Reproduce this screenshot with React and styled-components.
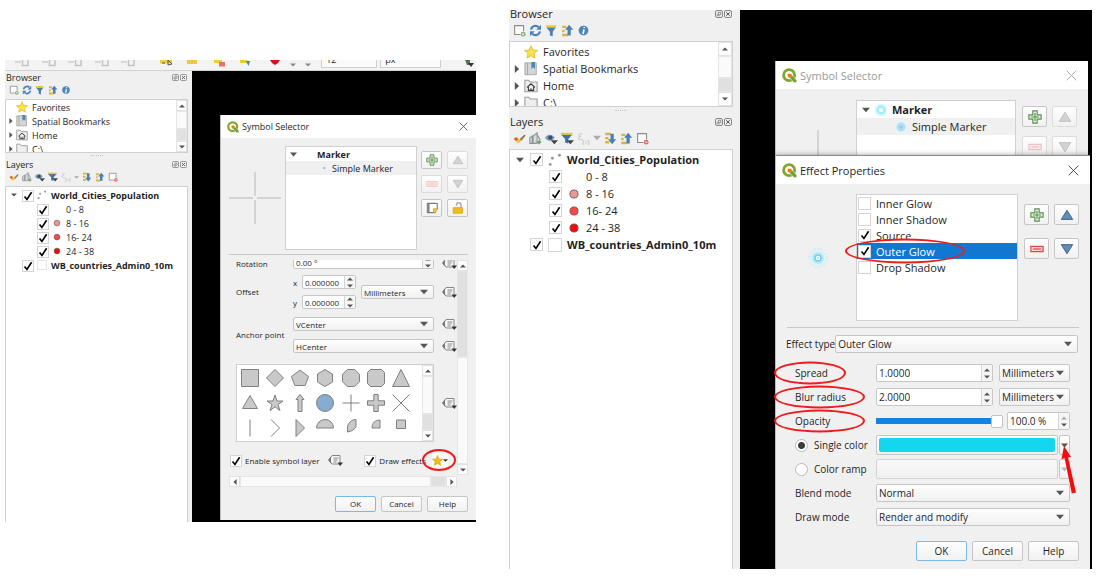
import React, { useState } from 'react';
import styled, { createGlobalStyle, css, ThemeProvider } from 'styled-components';

const small = {
  font: 9,
  formFont: 8,
  sidebar: 187,
  panelTitle: 12,
  panelTools: 14,
  panelIcon: 10,
  treeHeight: 54,
  splitter: 5,
  row: 14,
  rowGap: 4,
  arrow: 10,
  layerArrow: 16,
  treeIcon: 12,
  layerIcon: 10,
  indent: 15,
  check: 11,
  scroll: 11,
  titleBar: 23,
  logo: 12,
  pad: 8,
  preview: 56,
  control: 14,
  button: 16,
  buttonWidth: 41,
  footerTop: 9,
  tool: 18,
  toolWidth: 21,
  toolGap: 6,
};

const large = {
  font: 11,
  formFont: 10,
  sidebar: 231,
  panelTitle: 15,
  panelTools: 18,
  panelIcon: 13,
  treeHeight: 66,
  splitter: 7,
  row: 17,
  rowGap: 5,
  arrow: 14,
  layerArrow: 20,
  treeIcon: 14,
  layerIcon: 14,
  indent: 19,
  check: 13,
  scroll: 14,
  titleBar: 28,
  logo: 15,
  pad: 11,
  preview: 69,
  control: 18,
  button: 20,
  buttonWidth: 51,
  footerTop: 8,
  tool: 21,
  toolWidth: 25,
  toolGap: 9,
};

const px = (key) => (props) => `${props.theme[key]}px`;

const GlobalStyle = createGlobalStyle`
  *, *::before, *::after {
    box-sizing: border-box;
  }
  body {
    margin: 0;
    background: #fff;
    font-family: 'Open Sans', 'Noto Sans', sans-serif;
    color: #1f1f1f;
  }
  button, input, select {
    font: inherit;
    color: inherit;
    margin: 0;
    padding: 0;
  }
  svg {
    display: block;
    flex: none;
  }
`;

/* ---------- icons ---------- */

const Svg = ({ size = 16, w, h, children, box = '0 0 16 16' }) => (
  <svg width={w || size} height={h || size} viewBox={box} fill="none" aria-hidden="true">
    {children}
  </svg>
);

const QgisLogo = ({ size }) => (
  <Svg size={size}>
    <circle cx="7.6" cy="7.6" r="5.9" stroke="#7fa82c" strokeWidth="3" />
    <path d="M8.3 8.3l3-.2 4.4 5v2.4h-3L8.6 11z" fill="#6f9f2f" stroke="#fff" strokeWidth=".6" />
    <path d="M6 6h3.5l1.3 1.8-2.8 2.8L6 9z" fill="#ee7913" />
  </Svg>
);

const Cross = ({ size, color = '#444' }) => (
  <Svg size={size}>
    <path d="M1 1l14 14M15 1L1 15" stroke={color} strokeWidth="1.4" />
  </Svg>
);

const Tick = ({ size }) => (
  <Svg size={size}>
    <path d="M3.4 8.6l3.2 4L12.8 3" stroke="#000" strokeWidth="2.2" />
  </Svg>
);

const Triangle = ({ dir = 'down', size = 6, color = '#555' }) => {
  const d = {
    down: 'M0 2.300h10L5 7.700z',
    up: 'M0 7.700h10L5 2.300z',
    right: 'M2.300 0v10l5.400-5z',
    left: 'M7.700 0v10L2.300 5z',
  }[dir];
  return (
    <Svg size={size} box="0 0 10 10">
      <path d={d} fill={color} />
    </Svg>
  );
};

const FloatIcon = ({ size }) => (
  <Svg size={size}>
    <rect x="1" y="1" width="14" height="14" rx="3" stroke="#888" strokeWidth="2" />
    <path d="M4.5 7v4.5h5M7 4.5h4.5v5H7z" stroke="#777" strokeWidth="1.5" />
  </Svg>
);

const CloseBoxIcon = ({ size }) => (
  <Svg size={size}>
    <rect x="1" y="1" width="14" height="14" rx="3" stroke="#888" strokeWidth="2" />
    <path d="M4.5 4.5l7 7M11.5 4.5l-7 7" stroke="#555" strokeWidth="2" />
  </Svg>
);

const AddLayerIcon = ({ size }) => (
  <Svg size={size}>
    <path d="M9 13H2V2h11v7" stroke="#8b8b8b" strokeWidth="1.3" fill="#fafafa" />
    <circle cx="12.5" cy="12.5" r="3" fill="#7ba86c" />
    <path d="M12.5 10.8v3.4M10.8 12.5h3.4" stroke="#fff" />
  </Svg>
);

const RefreshIcon = ({ size }) => (
  <Svg size={size}>
    <path d="M2.5 7A5.6 5.6 0 0 1 12 4M13.5 9A5.6 5.6 0 0 1 4 12" stroke="#4a83b8" strokeWidth="2.6" />
    <path d="M14.8 1v6H9zM1.2 15V9H7z" fill="#4a83b8" />
  </Svg>
);

const FilterIcon = ({ size }) => (
  <Svg size={size}>
    <path d="M1.500 4h12L9.500 9.5V15l-3.500-1V9.5z" fill="#4d7fae" />
    <path d="M1.500 1.5h12v2.8h-12z" fill="#e9cb3a" />
  </Svg>
);

const CollapseIcon = ({ size }) => (
  <Svg size={size}>
    <path d="M1.5 2h5v3h-5zM1.500 7h3v3h-3zM1.5 12h7v3h-7z" fill="#d9b441" />
    <path d="M10 1l5 6h-3v7H8V7H5z" fill="#4a7fb5" />
  </Svg>
);

const ExpandIcon = ({ size }) => (
  <Svg size={size}>
    <path d="M1.5 1h7v3h-7zM1.5 6h4v3h-4zM1.5 11h5v3h-5z" fill="#d9b441" />
    <path d="M10 15l5-6h-3V2H8v7H5z" fill="#4a7fb5" />
  </Svg>
);

const InfoIcon = ({ size }) => (
  <Svg size={size}>
    <circle cx="8" cy="8" r="6" fill="#4f86b9" />
    <path d="M9 3.6v1.6M8.6 6.8L7.4 12.4" stroke="#fff" strokeWidth="2" />
  </Svg>
);

const BrushIcon = ({ size }) => (
  <Svg size={size}>
    <path d="M8 9l6-6 1.5 1.5L10 11z" fill="#9b7a55" />
    <path d="M1 8l4-2 5 5-4 3z" fill="#ecc23c" />
    <path d="M1 8l3-1.5 2 2.5-2.5 2z" fill="#d8524b" />
  </Svg>
);

const GroupIcon = ({ size }) => (
  <Svg size={size}>
    <path d="M1 14V7l3-2v9zM5 14V5l5-4v13z" stroke="#8b9298" strokeWidth="1.3" fill="#d7dadd" />
    <path d="M10 3l4 7" stroke="#8b9298" strokeWidth="1.4" />
    <path d="M12.5 10v5M10 12.5h5" stroke="#6ea15c" strokeWidth="2" />
  </Svg>
);

const EyeIcon = ({ size }) => (
  <Svg size={size}>
    <path d="M0 7c3-5 9-5 12 0-3 5-9 5-12 0z" fill="#7c99b3" />
    <circle cx="6.500" cy="7" r="2.600" fill="#34536f" />
    <path d="M7 10h9l-4.500 5z" fill="#444" />
  </Svg>
);

const FilterMenuIcon = ({ size }) => (
  <Svg size={size}>
    <path d="M0 3h14L9 8.500V14L5 13V8.500z" fill="#3f74a8" />
    <path d="M0 1h14v2.500H0z" fill="#dfc83e" />
    <path d="M7 10h9l-4.500 5z" fill="#444" />
  </Svg>
);

const ExpressionIcon = ({ size }) => (
  <Svg size={size}>
    <path
      d="M7 2.500C4 1.500 2 2.500 2.500 4s2 1.500 2.500 1.500C3 5.500 1 7 2 8.500s4 1 5 .5M9 10.500H7.500V15H9M13 10.500h1.500V15H13M11 11v3.500"
      stroke="#c8c8c8"
      strokeWidth="1.300"
    />
  </Svg>
);

const RemoveLayerIcon = ({ size }) => (
  <Svg size={size}>
    <path d="M9 13H2V2h11v7" stroke="#8b8b8b" strokeWidth="1.300" fill="#fafafa" />
    <circle cx="12.500" cy="12.500" r="3" fill="#e26b6b" />
    <path d="M10.800 12.500h3.400" stroke="#fff" />
  </Svg>
);

const StarIcon = ({ size, fill = '#fbe24a', stroke = '#e2b92c' }) => (
  <Svg size={size}>
    <path
      d="M8 .8l2.100 5 5.300.4-4 3.500 1.200 5.300L8 12.200 3.400 15l1.200-5.300-4-3.500 5.300-.4z"
      fill={fill}
      stroke={stroke}
      strokeLinejoin="round"
    />
  </Svg>
);

const BookmarkIcon = ({ size }) => (
  <Svg size={size}>
    <path d="M1 1h13v13.500H1z" fill="#d5d5d5" stroke="#a2a2a2" />
    <path d="M4 1v13.500" stroke="#a2a2a2" />
    <path d="M8.500 0h4v8l-2-2-2 2z" fill="#4d83b5" />
  </Svg>
);

const FolderIcon = ({ size, home }) => (
  <Svg size={size}>
    <path d="M1 14.500V1.500h4.500l1.500 2h8v11z" fill="#eee" stroke="#9b9b9b" strokeWidth="1.200" />
    {home && <path d="M3.500 9.500L8 5.500l4.500 4M5 9v4h6V9M8 10.500V13" stroke="#333" strokeWidth="1.200" />}
  </Svg>
);

const PointsIcon = ({ size }) => (
  <Svg size={size}>
    <circle cx="2.500" cy="13" r="1.700" fill="#999" />
    <circle cx="5" cy="6" r="1.700" fill="#999" />
    <circle cx="13" cy="2.500" r="1.700" fill="#999" />
  </Svg>
);

const DotIcon = ({ size, color }) => (
  <Svg size={size}>
    {color && <circle cx="8" cy="8" r="4.600" fill={color} stroke="#6c5050" strokeWidth="1" />}
  </Svg>
);

const BoxIcon = ({ size }) => (
  <Svg size={size}>
    <path d="M.5.5h15v15H.5z" fill="#fff" stroke="#cfcfcf" />
  </Svg>
);

const PlusIcon = ({ size, color = '#5b9150' }) => (
  <Svg size={size}>
    <path
      d="M5.500 1h5v4.500H15v5h-4.500V15h-5v-4.500H1v-5h4.500z"
      fill="#e4eee0"
      stroke={color}
      strokeWidth="1.300"
    />
    <path d="M8 3.500v9M3.500 8h9" stroke={color} strokeWidth="1.300" />
  </Svg>
);

const MinusIcon = ({ size, faded }) => (
  <Svg size={size}>
    <g opacity={faded ? 0.3 : 1}>
      <path d="M1 5h14v6H1z" fill="#fbd0d0" stroke="#e3474e" strokeWidth="1.400" />
      <path d="M3.500 8h9" stroke="#e3474e" strokeWidth="1.400" />
    </g>
  </Svg>
);

const MoveIcon = ({ size, down, faded }) => (
  <Svg size={size}>
    <path
      d={down ? 'M1.500 3h13L8 13.500z' : 'M1.500 13h13L8 2.500z'}
      fill={faded ? '#d3d3d3' : '#5f8cba'}
      stroke={faded ? '#bcbcbc' : '#34587e'}
      strokeLinejoin="round"
    />
  </Svg>
);

const DuplicateIcon = ({ size }) => (
  <Svg size={size}>
    <path d="M1 1h12v1.500H4V13h9v2H1z" fill="#8a8a8a" />
    <path d="M4 2h11v7l-5 5H4z" fill="#fff" stroke="#777" strokeWidth="1.400" />
    <path d="M10 9h5v1.500L11.500 14H10z" fill="#f1cf45" stroke="#c79a1c" />
  </Svg>
);

const LockIcon = ({ size }) => (
  <Svg size={size}>
    <path d="M6 5V4a3 3 0 0 1 6 0v4" stroke="#aaa" strokeWidth="2" />
    <path d="M1.500 7.500h12.500v7.500H1.500z" fill="#efbd1c" stroke="#d6a61b" />
  </Svg>
);

const OverrideIcon = () => (
  <Svg w={15} h={12} box="0 0 15 12">
    <path d="M4 1.500h8v8.500H4L1 6z" fill="#f5f5f5" stroke="#888" />
    <path d="M3 2.500v7L0 6z" fill="#777" />
    <path d="M5.500 4h5M5.500 6h4M5.500 8h3" stroke="#888" />
    <path d="M9.500 8.500h5.500L12.200 12z" fill="#333" />
  </Svg>
);

const GlowIcon = ({ size, core = '#fff', tone = '#9be4f7', edge = '#e3f7fc' }) => (
  <Svg size={size}>
    <circle cx="8" cy="8" r="7.500" fill={edge} />
    <circle cx="8" cy="8" r="5.300" fill={tone} opacity=".75" />
    <circle cx="8" cy="8" r="2.300" fill={core} />
  </Svg>
);

const GlowPreview = () => (
  <Svg size={22} box="0 0 22 22">
    <circle cx="11" cy="11" r="8.500" stroke="#cdeff8" strokeWidth="3" strokeDasharray="1.500 1.500" />
    <circle cx="11" cy="11" r="6" fill="#b4eaf9" />
    <circle cx="11" cy="11" r="3" fill="#fff" stroke="#72cdec" strokeWidth="1.600" />
    <circle cx="11" cy="11" r="1" fill="#a9dcf2" />
  </Svg>
);

/* ---------- shared controls ---------- */

const CheckWrap = styled.span`
  display: inline-grid;
  place-items: center;
  flex: none;
  width: ${px('check')};
  height: ${px('check')};
  > * {
    grid-area: 1 / 1;
  }
  svg {
    pointer-events: none;
    visibility: hidden;
  }
  input:checked + svg {
    visibility: visible;
  }
`;

const CheckInput = styled.input`
  appearance: none;
  width: 100%;
  height: 100%;
  background: #fff;
  border: 1px solid #d4d4d4;
`;

const Check = ({ checked, ...rest }) => (
  <CheckWrap>
    <CheckInput type="checkbox" defaultChecked={checked} {...rest} />
    <Tick size={12} />
  </CheckWrap>
);

const CheckLabel = styled.label`
  display: flex;
  align-items: center;
  gap: ${px('rowGap')};
  white-space: nowrap;
`;

const raised = css`
  background: linear-gradient(#fefefe, #f1f1f1);
  border: 1px solid #c6c6c6;
  border-radius: 2px;
`;

const PushButton = styled.button`
  ${raised}
  width: ${px('buttonWidth')};
  height: ${px('button')};
  line-height: 1;
  border-color: ${(props) => (props.$primary ? '#7db9e8' : '#c6c6c6')};
`;

const ToolButton = styled.button`
  ${raised}
  display: grid;
  place-items: center;
  width: ${px('toolWidth')};
  height: ${px('tool')};
  border-color: ${(props) => (props.disabled ? '#dcdcdc' : '#c6c6c6')};
`;

const PlainButton = styled.button`
  display: grid;
  place-items: center;
  border: none;
  background: none;
`;

const SelectWrap = styled.span`
  display: grid;
  align-items: center;
  min-width: 0;
  flex: ${(props) => (props.$width ? `0 0 ${props.$width}px` : '1')};
  > * {
    grid-area: 1 / 1;
  }
  svg {
    justify-self: end;
    margin-right: 6px;
    pointer-events: none;
  }
`;

const SelectBox = styled.select`
  ${raised}
  appearance: none;
  width: 100%;
  height: ${px('control')};
  padding: 0 2px;
`;

const Select = ({ value, width, ...rest }) => (
  <SelectWrap $width={width}>
    <SelectBox {...rest}>
      <option>{value}</option>
    </SelectBox>
    <Triangle size={8} />
  </SelectWrap>
);

const SpinWrap = styled.span`
  display: flex;
  flex: ${(props) => (props.$width ? `0 0 ${props.$width}px` : '1')};
  min-width: 0;
  height: ${px('control')};
  background: #fff;
  border: 1px solid #c6c6c6;
  border-radius: 2px;
`;

const SpinInput = styled.input`
  flex: 1;
  min-width: 0;
  width: 0;
  padding-left: 2px;
  border: none;
  background: none;
  line-height: 1;
`;

const SpinArrows = styled.span`
  display: flex;
  flex-direction: column;
  justify-content: center;
  align-items: center;
  gap: 1px;
  width: 11px;
  background: #f6f6f6;
  border-left: 1px solid #d4d4d4;
`;

const Spin = ({ value, width, maxed, ...rest }) => (
  <SpinWrap $width={width}>
    <SpinInput type="text" defaultValue={value} {...rest} />
    <SpinArrows>
      <PlainButton aria-label="Increase">
        <Triangle dir="up" color={maxed ? '#aaa' : '#555'} />
      </PlainButton>
      <PlainButton aria-label="Decrease">
        <Triangle />
      </PlainButton>
    </SpinArrows>
  </SpinWrap>
);

const Marked = styled.span`
  position: relative;
`;

const RedRing = styled.span`
  position: absolute;
  top: 50%;
  left: ${(props) => props.$left}px;
  width: ${(props) => props.$width}px;
  height: ${(props) => props.$height}px;
  transform: translateY(-50%);
  border: 2px solid #ee1c1c;
  border-radius: 50%;
  pointer-events: none;
  z-index: 2;
`;

/* ---------- scroll bars ---------- */

const Bar = styled.div`
  display: flex;
  flex-direction: ${(props) => (props.$horizontal ? 'row' : 'column')};
  flex: none;
  ${(props) => (props.$horizontal ? 'height' : 'width')}: ${px('scroll')};
  background: #f8f8f8;
`;

const BarButton = styled.button`
  display: grid;
  place-items: center;
  flex: none;
  width: ${px('scroll')};
  height: ${px('scroll')};
  border: 1px solid #e2e2e2;
  background: #fdfdfd;
`;

const BarPart = styled.div`
  flex: ${(props) => props.$size};
  background: ${(props) => (props.$thumb ? '#e0e0e0' : '#fafafa')};
  border: 1px solid #e6e6e6;
`;

const ScrollBar = ({ horizontal, before = 0, thumb, after = 0 }) => (
  <Bar $horizontal={horizontal}>
    <BarButton aria-label="Scroll back">
      <Triangle dir={horizontal ? 'left' : 'up'} />
    </BarButton>
    {before > 0 && <BarPart $size={before} />}
    <BarPart $size={thumb} $thumb />
    {after > 0 && <BarPart $size={after} />}
    <BarButton aria-label="Scroll forward">
      <Triangle dir={horizontal ? 'right' : 'down'} />
    </BarButton>
  </Bar>
);

/* ---------- browser and layers panels ---------- */

const Sidebar = styled.aside`
  display: flex;
  flex-direction: column;
  flex: 0 0 ${px('sidebar')};
  padding-right: ${(props) => (props.$cropped ? 7 : 4)}px;
  margin-top: ${(props) => (props.$cropped ? -4 : 0)}px;
  background: #f0f0f0;
`;

const PanelTitle = styled.header`
  display: flex;
  align-items: center;
  gap: 1px;
  height: ${px('panelTitle')};
  padding: 0 1px;
  line-height: 1;
  h2 {
    flex: 1;
    margin: 0;
    font-size: inherit;
    font-weight: 400;
  }
`;

const PanelTools = styled.div`
  display: flex;
  align-items: center;
  gap: 3px;
  height: ${px('panelTools')};
  padding-left: 4px;
  margin-bottom: 2px;
`;

const Tree = styled.div`
  display: flex;
  height: ${px('treeHeight')};
  background: #fff;
  border: 1px solid #d0d0d0;
  ul {
    flex: 1;
    overflow: hidden;
  }
`;

const List = styled.ul`
  margin: 0;
  padding: ${(props) => (props.$padded ? 1 : 0)}px 0 0;
  list-style: none;
`;

const LayerList = styled(List)`
  flex: 1;
  background: #fff;
  border: 1px solid #d0d0d0;
  border-bottom: none;
`;

const Row = styled.li`
  display: flex;
  align-items: center;
  gap: ${px('rowGap')};
  height: ${px('row')};
  padding-left: ${(props) => (props.$nested ? props.theme.indent : 0)}px;
  font-weight: ${(props) => (props.$bold ? 700 : 400)};
  line-height: 1;
  white-space: nowrap;
`;

const RowArrow = styled.span`
  display: grid;
  place-items: center;
  width: ${(props) => (props.$layer ? props.theme.layerArrow : props.theme.arrow)}px;
  margin-right: -${px('rowGap')};
`;

const Splitter = styled.div`
  display: grid;
  place-items: center;
  height: ${px('splitter')};
  &::after {
    content: '';
    width: 12px;
    border-top: 1px dotted #c5c5c5;
  }
`;

const layers = [
  { name: 'World_Cities_Population', icon: PointsIcon, open: true },
  { name: '0 - 8', icon: DotIcon, nested: true },
  { name: '8 - 16', icon: DotIcon, color: '#e89a97', nested: true },
  { name: '16- 24', icon: DotIcon, color: '#f8484a', nested: true },
  { name: '24 - 38', icon: DotIcon, color: '#f90a0a', nested: true },
  { name: 'WB_countries_Admin0_10m', icon: BoxIcon },
];

const PanelHeader = ({ title, size }) => (
  <PanelTitle>
    <h2>{title}</h2>
    <PlainButton aria-label={`Float ${title}`}>
      <FloatIcon size={size} />
    </PlainButton>
    <PlainButton aria-label={`Close ${title}`}>
      <CloseBoxIcon size={size} />
    </PlainButton>
  </PanelTitle>
);

const browserTools = [
  ['Add layer', AddLayerIcon],
  ['Refresh', RefreshIcon],
  ['Filter', FilterIcon],
  ['Collapse all', CollapseIcon],
  ['Properties', InfoIcon],
];

const layerTools = [
  ['Style', BrushIcon],
  ['Add group', GroupIcon],
  ['Visibility', EyeIcon],
  ['Filter legend', FilterMenuIcon],
  ['Filter by expression', ExpressionIcon],
  ['More', ({ size }) => <Triangle size={size - 5} color="#aaa" />],
  ['Expand all', ExpandIcon],
  ['Collapse all layers', CollapseIcon],
  ['Remove layer', RemoveLayerIcon],
];

const Tools = ({ items, size }) => (
  <PanelTools>
    {items.map(([label, Icon]) => (
      <PlainButton key={label} aria-label={label}>
        <Icon size={size} />
      </PlainButton>
    ))}
  </PanelTools>
);

const Panels = ({ theme, cropped }) => (
  <Sidebar $cropped={cropped}>
    <PanelHeader title="Browser" size={cropped ? 8 : 7} />
    <Tools items={browserTools} size={theme.panelIcon} />
    <Tree>
      <List $padded={cropped}>
        <Row>
          <RowArrow />
          <StarIcon size={theme.treeIcon} />
          Favorites
        </Row>
        {[
          ['Spatial Bookmarks', <BookmarkIcon size={theme.treeIcon} />],
          ['Home', <FolderIcon size={theme.treeIcon} home />],
          ['C:\\', <FolderIcon size={theme.treeIcon} />],
        ].map(([name, icon]) => (
          <Row key={name}>
            <RowArrow>
              <Triangle dir="right" size={theme.font - 3} />
            </RowArrow>
            {icon}
            {name}
          </Row>
        ))}
      </List>
      <ScrollBar before={5} thumb={3} />
    </Tree>
    <Splitter />
    <PanelHeader title="Layers" size={cropped ? 8 : 7} />
    <Tools items={layerTools} size={theme.panelIcon} />
    <LayerList $padded>
      {layers.map(({ name, icon: Icon, open, nested, color }) => (
        <Row key={name} $nested={nested} $bold={!nested}>
          <RowArrow $layer>{open && <Triangle size={theme.font - 3} />}</RowArrow>
          <Check checked aria-label={name} />
          <Icon size={theme.layerIcon} color={color} />
          {name}
        </Row>
      ))}
    </LayerList>
  </Sidebar>
);

/* ---------- windows ---------- */

const Window = styled.section`
  display: flex;
  flex-direction: column;
  background: #f0f0f0;
  border: 1px solid #bdbdbd;
  border-width: 0 0 0 1px;
  ${(props) =>
    props.$behind &&
    css`
      height: 94px;
      margin-right: 2px;
      overflow: hidden;
    `}
  ${(props) =>
    props.$front &&
    css`
      border-top: 1px solid #8c8c8c;
      box-shadow: 0 0 5px #00000066;
      z-index: 1;
    `}
`;

const TitleBar = styled.header`
  display: flex;
  align-items: center;
  gap: 3px;
  flex: none;
  height: ${px('titleBar')};
  padding: 0 ${px('pad')} 0 6px;
  background: #fff;
  color: ${(props) => (props.$inactive ? '#9a9a9a' : '#1f1f1f')};
  line-height: 1;
  h1 {
    flex: 1;
    margin: 0;
    font-size: inherit;
    font-weight: 400;
  }
`;

const WindowTitle = ({ title, theme, inactive }) => (
  <TitleBar $inactive={inactive}>
    <QgisLogo size={theme.logo} />
    <h1>{title}</h1>
    <PlainButton aria-label={`Close ${title}`}>
      <Cross size={theme.font} color={inactive ? '#aaa' : '#444'} />
    </PlainButton>
  </TitleBar>
);

const Top = styled.div`
  display: grid;
  grid-template-columns: ${px('preview')} 1fr auto;
  padding: ${(props) => props.$top}px ${px('pad')} 0;
`;

const Preview = styled.div`
  display: grid;
  place-items: center;
  padding-right: ${(props) => props.$right}px;
`;

const WhiteList = styled(List)`
  min-height: ${(props) => props.$height}px;
  background: #fff;
  border: 1px solid #d0d0d0;
`;

const MarkerRow = styled(Row)`
  gap: 4px;
  padding-left: ${(props) => props.$left}px;
  background: ${(props) => (props.$current ? '#f0f0f0' : 'none')};
`;

const ToolGrid = styled.div`
  display: grid;
  grid-template-columns: auto auto;
  align-content: start;
  gap: ${(props) => props.$gap || props.theme.toolGap}px 5px;
  padding: ${(props) => props.$top}px 0 0 ${(props) => props.$left}px;
`;

const Rule = styled.hr`
  margin: ${(props) => props.$space};
  border: none;
  border-top: 1px solid #c9c9c9;
`;

const Footer = styled.footer`
  display: flex;
  justify-content: flex-end;
  gap: 5px;
  padding: ${px('footerTop')} ${px('pad')} 8px;
  font-size: ${px('formFont')};
`;

const Footing = () => (
  <Footer>
    <PushButton $primary>OK</PushButton>
    <PushButton>Cancel</PushButton>
    <PushButton>Help</PushButton>
  </Footer>
);

/* ---------- symbol selector ---------- */

const ScrollFrame = styled.div`
  display: flex;
  margin: 0 ${px('pad')};
  font-size: ${px('formFont')};
`;

const ScrollBody = styled.div`
  flex: 1;
  min-width: 0;
`;

const BottomScroll = styled.div`
  margin: 1px 19px 0 8px;
`;

const CutRow = styled.div`
  display: flex;
  align-items: flex-end;
  height: 9px;
  margin-bottom: 6px;
  padding-left: 7px;
  overflow: hidden;
`;

const FieldName = styled.span`
  flex: 0 0 57px;
  line-height: 1.4;
  white-space: nowrap;
`;

const Stack = styled.div`
  display: flex;
  flex-direction: column;
  flex: 1;
  min-width: 0;
  gap: ${(props) => props.$gap}px;
`;

const Axis = styled.label`
  display: flex;
  align-items: center;
  span:first-child {
    flex: 0 0 9px;
  }
`;

const Block = styled.div`
  display: flex;
  align-items: center;
  padding-left: 7px;
  margin-bottom: ${(props) => props.$after}px;
`;

const Pair = styled.div`
  display: flex;
  align-items: center;
  flex: 1;
  min-width: 0;
  gap: 5px;
`;

const Overrides = styled.div`
  display: flex;
  flex-direction: column;
  gap: 10px;
  padding-left: 8px;
`;

const ShapeBox = styled.div`
  display: flex;
  flex: 1;
  height: 78px;
  background: #fff;
  border: 1px solid #cfcfcf;
`;

const ShapeGrid = styled.div`
  display: grid;
  grid-template-columns: repeat(7, 1fr);
  grid-auto-rows: 25px;
  flex: 1;
  padding-right: 8px;
`;

const shapes = [
  'M1.500 1.500h17v17h-17z',
  'M10 1.500l8.500 8.500-8.500 8.500L1.500 10z',
  'M10 2l8.500 6.500-3.300 9H4.800l-3.300-9z',
  'M10 1.500l7.500 4.500v8L10 18.500 2.500 14V6z',
  'M6.300 1.500h7.400l4.800 4.800v7.400l-4.800 4.800H6.300l-4.800-4.800V6.300z',
  'M4.500 1.500h11l3 3v11l-3 3h-11l-3-3v-11z',
  'M10 1.500l8.500 17h-17z',
  'M10 2.500l7.500 13h-15z',
  'M10 2l2 6h6l-5 3.500 2 6-5-3.700-5 3.700 2-6L2 8h6z',
  'M10 1.500l4 5h-2v12H8v-12H6z',
  'M18.500 10a8.500 8.500 0 1 1-17 0 8.500 8.500 0 0 1 17 0z',
  'M10 1.500v17M1.500 10h17',
  'M7.800 1.500h4.400v6.300h6.300v4.400h-6.300v6.300H7.800v-6.300H1.500V7.800h6.300z',
  'M1.500 1.500l17 17M18.500 1.500l-17 17',
  'M10 1.500v17',
  'M6 1.500l8.500 8.500L6 18.500',
  'M6 1.500l8.500 8.500L6 18.500z',
  'M1.500 10a8.500 8.500 0 0 1 17 0z',
  'M6.500 14V8.500c1-4 4-7 8.500-7v7c-1 3-5 5-8.500 5.500z',
  'M6 10c0-5 3-8 8-8v8z',
  'M5.500 2h9v8.500h-9z',
];

const shapeFill = (i) => {
  if (i === 10) return '#86add0';
  return [11, 13, 14, 15].includes(i) ? 'none' : '#c9c9c9';
};

const EffectRow = styled.div`
  display: flex;
  align-items: center;
  height: 22px;
  padding: 0 0 8px 1px;
`;

const OverrideGap = styled.span`
  flex: 1;
  padding-left: 8px;
`;

const StarButton = styled.button`
  position: relative;
  display: flex;
  align-items: center;
  width: 16px;
  height: 14px;
  margin: 0 9px 0 6px;
  border: none;
  background: #fbfbfb;
`;

const SymbolSelector = ({ theme }) => (
  <Window>
    <WindowTitle title="Symbol Selector" theme={theme} />
    <Top $top={8}>
      <Preview $right={4}>
        <Svg size={52} box="0 0 52 52">
          <path d="M26 0v24M26 28v24M0 26h24M28 26h24" stroke="#c9c9c9" strokeWidth="1.500" />
        </Svg>
      </Preview>
      <WhiteList $height={104}>
        <MarkerRow $left={4} $bold>
          <Triangle size={7} />
          <Svg size={12} />
          Marker
        </MarkerRow>
        <MarkerRow $left={32} $current>
          <Svg size={10}>
            <circle cx="10" cy="8" r="2" fill="#8cc5ea" />
          </Svg>
          Simple Marker
        </MarkerRow>
      </WhiteList>
      <ToolGrid $top={5} $left={4}>
        <ToolButton aria-label="Add symbol layer">
          <PlusIcon size={12} />
        </ToolButton>
        <ToolButton aria-label="Move up" disabled>
          <MoveIcon size={12} faded />
        </ToolButton>
        <ToolButton aria-label="Remove symbol layer" disabled>
          <MinusIcon size={12} faded />
        </ToolButton>
        <ToolButton aria-label="Move down" disabled>
          <MoveIcon size={12} down faded />
        </ToolButton>
        <ToolButton aria-label="Duplicate">
          <DuplicateIcon size={12} />
        </ToolButton>
        <ToolButton aria-label="Lock color">
          <LockIcon size={12} />
        </ToolButton>
      </ToolGrid>
    </Top>
    <Rule $space="4px 8px 5px" />
    <ScrollFrame>
      <ScrollBody>
        <CutRow>
          <FieldName>Rotation</FieldName>
          <Spin value="0.00 °" aria-label="Rotation" />
          <Overrides>
            <OverrideIcon />
          </Overrides>
        </CutRow>
        <Block $after={8}>
          <FieldName>Offset</FieldName>
          <Pair>
            <Stack $gap={6}>
              <Axis>
                <span>x</span>
                <Spin value="0.000000" />
              </Axis>
              <Axis>
                <span>y</span>
                <Spin value="0.000000" />
              </Axis>
            </Stack>
            <Select value="Millimeters" width={73} aria-label="Offset unit" />
          </Pair>
          <Overrides>
            <OverrideIcon />
          </Overrides>
        </Block>
        <Block $after={11}>
          <FieldName>Anchor point</FieldName>
          <Stack $gap={8}>
            <Select value="VCenter" aria-label="Vertical anchor" />
            <Select value="HCenter" aria-label="Horizontal anchor" />
          </Stack>
          <Overrides>
            <OverrideIcon />
            <OverrideIcon />
          </Overrides>
        </Block>
        <Block $after={11}>
          <ShapeBox>
            <ShapeGrid>
              {shapes.map((d, i) => (
                <PlainButton key={d} aria-label={`Shape ${i + 1}`}>
                  <Svg size={20} box="0 0 20 20">
                    <path d={d} fill={shapeFill(i)} stroke="#808080" />
                  </Svg>
                </PlainButton>
              ))}
            </ShapeGrid>
            <ScrollBar before={10} thumb={4} />
          </ShapeBox>
          <Overrides>
            <OverrideIcon />
          </Overrides>
        </Block>
        <EffectRow>
          <CheckLabel>
            <Check checked />
            Enable symbol layer
          </CheckLabel>
          <OverrideGap>
            <OverrideIcon />
          </OverrideGap>
          <CheckLabel>
            <Check checked />
            Draw effects
          </CheckLabel>
          <StarButton aria-label="Customize effects">
            <StarIcon size={11} fill="#efbd1c" stroke="#d9a514" />
            <Triangle size={5} color="#333" />
            <RedRing $left={-10} $width={34} $height={22} />
          </StarButton>
        </EffectRow>
      </ScrollBody>
      <ScrollBar thumb={85} after={107} />
    </ScrollFrame>
    <BottomScroll>
      <ScrollBar horizontal before={192} thumb={13} />
    </BottomScroll>
    <Footing />
  </Window>
);

/* ---------- effect properties ---------- */

const EffectItem = styled.li`
  display: flex;
  align-items: center;
  height: 16px;
  padding-left: 1px;
  line-height: 1;
  background: ${(props) => (props.$selected ? '#1177d1' : 'none')};
  color: ${(props) => (props.$selected ? '#fff' : 'inherit')};
  position: relative;
`;

const EffectType = styled.div`
  display: grid;
  grid-template-columns: auto 1fr;
  align-items: center;
  padding: 0 12px 0 10px;
  font-size: ${px('formFont')};
  white-space: nowrap;
`;

const Form = styled.div`
  display: grid;
  grid-template-columns: 81px 1fr;
  grid-auto-rows: 18px;
  row-gap: 6px;
  align-items: center;
  padding: 11px 20px 7px 19px;
  font-size: ${px('formFont')};
`;

const Controls = styled.div`
  display: flex;
  align-items: center;
  gap: ${(props) => props.$gap || 6}px;
  min-width: 0;
`;

const Slider = styled.input`
  appearance: none;
  flex: 1;
  min-width: 0;
  height: 14px;
  background: linear-gradient(#1583db, #1583db) center / 100% 6px no-repeat;
  &::-webkit-slider-thumb {
    appearance: none;
    width: 12px;
    height: 13px;
    background: #fff;
    border: 1px solid #c2c2c2;
    border-radius: 2px;
  }
`;

const RadioLabel = styled.label`
  display: flex;
  align-items: center;
  gap: 6px;
  white-space: nowrap;
`;

const Radio = styled.input`
  appearance: none;
  flex: none;
  width: 13px;
  height: 13px;
  background: #fff;
  border: 1px solid #b9b9b9;
  border-radius: 50%;
  &:checked {
    background: radial-gradient(circle, #3c3c3c 3px, #fff 4px);
  }
`;

const ColorButton = styled.button`
  ${raised}
  flex: 1;
  height: 20px;
  padding: 2px;
  opacity: ${(props) => (props.disabled ? 0.7 : 1)};
  span {
    display: block;
    height: 100%;
    border-radius: 2px;
    background: ${(props) => props.$color || 'none'};
  }
`;

const ColorMenu = styled.button`
  ${raised}
  position: relative;
  display: grid;
  place-items: center;
  width: 11px;
  height: 20px;
`;

const Arrow = styled.span`
  position: absolute;
  top: 10px;
  left: 0;
  z-index: 2;
  pointer-events: none;
`;

const effects = [
  { name: 'Inner Glow' },
  { name: 'Inner Shadow' },
  { name: 'Source', on: true },
  { name: 'Outer Glow', on: true, selected: true },
  { name: 'Drop Shadow' },
];

const EffectProperties = ({ theme }) => {
  const [opacity, setOpacity] = useState(100);

  return (
    <Window $front>
      <WindowTitle title="Effect Properties" theme={theme} />
      <Top $top={10}>
        <Preview $right={7}>
          <GlowPreview />
        </Preview>
        <WhiteList $height={127}>
          {effects.map(({ name, on, selected }) => (
            <EffectItem key={name} $selected={selected}>
              <CheckLabel>
                <Check checked={on} />
                {name}
              </CheckLabel>
              {selected && <RedRing $left={-12} $width={120} $height={25} />}
            </EffectItem>
          ))}
        </WhiteList>
        <ToolGrid $top={10} $left={6} $gap={13}>
          <ToolButton aria-label="Add effect">
            <PlusIcon size={14} />
          </ToolButton>
          <ToolButton aria-label="Move effect up">
            <MoveIcon size={14} />
          </ToolButton>
          <ToolButton aria-label="Remove effect">
            <MinusIcon size={14} />
          </ToolButton>
          <ToolButton aria-label="Move effect down">
            <MoveIcon size={14} down />
          </ToolButton>
        </ToolGrid>
      </Top>
      <Rule $space="6px 11px 7px" />
      <EffectType>
        <label htmlFor="effect-type">Effect type</label>
        <Select id="effect-type" value="Outer Glow" />
      </EffectType>
      <Form>
        <Marked>
          <label htmlFor="spread">Spread</label>
          <RedRing $left={-21} $width={72} $height={23} />
        </Marked>
        <Controls>
          <Spin id="spread" value="1.0000" />
          <Select value="Millimeters" width={71} aria-label="Spread unit" />
        </Controls>
        <Marked>
          <label htmlFor="blur">Blur radius</label>
          <RedRing $left={-21} $width={91} $height={23} />
        </Marked>
        <Controls>
          <Spin id="blur" value="2.0000" />
          <Select value="Millimeters" width={71} aria-label="Blur unit" />
        </Controls>
        <Marked>
          <label htmlFor="opacity">Opacity</label>
          <RedRing $left={-21} $width={91} $height={23} />
        </Marked>
        <Controls $gap={4}>
          <Slider
            id="opacity"
            type="range"
            value={opacity}
            onChange={(e) => setOpacity(Number(e.target.value))}
          />
          <Spin
            key={opacity}
            value={`${opacity.toFixed(1)} %`}
            width={63}
            maxed={opacity === 100}
            aria-label="Opacity value"
          />
        </Controls>
        <RadioLabel>
          <Radio type="radio" name="color" defaultChecked />
          Single color
        </RadioLabel>
        <Controls $gap={1}>
          <ColorButton aria-label="Glow color" $color="#14d6ef">
            <span />
          </ColorButton>
          <ColorMenu aria-label="Color menu">
            <Triangle size={7} />
            <Arrow>
              <Svg w={18} h={48} box="0 0 18 48">
                <path d="M4 0l7 11-3 .6L16 46.500l-4.200.9L4.600 12.300 1.500 13z" fill="#f50d0d" />
              </Svg>
            </Arrow>
          </ColorMenu>
        </Controls>
        <RadioLabel>
          <Radio type="radio" name="color" />
          Color ramp
        </RadioLabel>
        <Controls $gap={1}>
          <ColorButton aria-label="Ramp" disabled />
          <ColorMenu aria-label="Ramp menu" disabled>
            <Triangle size={7} color="#bbb" />
          </ColorMenu>
        </Controls>
        <label htmlFor="blend">Blend mode</label>
        <Controls>
          <Select id="blend" value="Normal" />
        </Controls>
        <label htmlFor="draw">Draw mode</label>
        <Controls>
          <Select id="draw" value="Render and modify" />
        </Controls>
      </Form>
      <Footing />
    </Window>
  );
};

const SelectorBehind = ({ theme }) => (
  <Window $behind>
    <WindowTitle title="Symbol Selector" theme={theme} inactive />
    <Top $top={11}>
      <Preview $right={7}>
        <Svg w={2} h={100} box="0 0 2 100">
          <path d="M1 30v70" stroke="#b9b9b9" />
        </Svg>
      </Preview>
      <WhiteList $height={100}>
        <MarkerRow $left={5} $bold>
          <Triangle size={8} />
          <GlowIcon size={14} tone="#8fe9fb" />
          Marker
        </MarkerRow>
        <MarkerRow $left={37} $current>
          <GlowIcon size={14} core="#a5cdec" tone="#a9d3f0" />
          Simple Marker
        </MarkerRow>
      </WhiteList>
      <ToolGrid $top={6} $left={6}>
        <ToolButton aria-label="Add symbol layer">
          <PlusIcon size={14} />
        </ToolButton>
        <ToolButton aria-label="Move up" disabled>
          <MoveIcon size={14} faded />
        </ToolButton>
        <ToolButton aria-label="Remove symbol layer" disabled>
          <MinusIcon size={14} faded />
        </ToolButton>
        <ToolButton aria-label="Move down" disabled>
          <MoveIcon size={14} down faded />
        </ToolButton>
      </ToolGrid>
    </Top>
  </Window>
);

/* ---------- page ---------- */

const Page = styled.main`
  display: grid;
  grid-template-columns: 471fr 583fr;
  gap: 33px;
  align-items: start;
  padding: 10px 8px 10px 5px;
`;

const Shot = styled.div`
  overflow: hidden;
  margin-top: ${(props) => props.$top || 0}px;
  font-size: ${px('font')};
`;

const Workspace = styled.div`
  display: flex;
`;

const MapCanvas = styled.div`
  display: flex;
  flex-direction: column;
  flex: 1;
  min-width: 0;
  padding: ${(props) => props.$pad};
  background: #000;
`;

const MainToolbar = styled.div`
  display: flex;
  align-items: flex-end;
  height: 11px;
  padding: 0 2px 2px 10px;
  overflow: hidden;
  background: #f3f3f3;
  border-bottom: 1px solid #d2d2d2;
`;

const Slot = styled.span`
  display: flex;
  align-items: flex-end;
  flex: 0 1 ${(props) => props.$width}px;
  min-width: 0;
`;

const ToolField = styled.input`
  flex: 0 1 ${(props) => props.$width}px;
  min-width: 0;
  height: 16px;
  padding: 0 0 1px 4px;
  margin-right: 3px;
  border: 1px solid #cfcfcf;
  background: #fafafa;
`;

const TopTools = () => (
  <MainToolbar>
    {[1, 2, 3, 4, 5].map((n) => (
      <Slot key={n} $width={27}>
        <Svg w={16} h={8} box="0 0 16 8">
          <path d="M0 2h6" stroke="#cfcfcf" strokeWidth="1.500" />
          <path d="M7.500 0v5.500h5.500V0" stroke="#c4c4c4" strokeWidth="1.500" />
        </Svg>
      </Slot>
    ))}
    <Slot $width={12} />
    <Slot $width={28}>
      <Svg w={14} h={8} box="0 0 14 8">
        <path d="M0 0h12v3.500H0z" fill="#efcd3c" />
        <path d="M2 3h3M8 0v5l4-1z" stroke="#555" />
      </Svg>
    </Slot>
    <Slot $width={27}>
      <Svg w={12} h={8} box="0 0 12 8">
        <path d="M0 0h10v4H0z" fill="#f0c838" />
      </Svg>
    </Slot>
    <Slot $width={27}>
      <Svg w={13} h={8} box="0 0 13 8">
        <path d="M0 0h8v3H0z" fill="#f0c838" />
        <path d="M5 2h6v4.500H5z" fill="#e8736c" />
      </Svg>
    </Slot>
    <Slot $width={30}>
      <Svg w={12} h={8} box="0 0 12 8">
        <path d="M0 0h7v3H0z" fill="#f0c838" />
        <path d="M6 1h4L8.500 6z" fill="#4d7fae" />
      </Svg>
    </Slot>
    <Slot $width={20}>
      <Svg w={10} h={8} box="0 0 10 8">
        <path d="M0 0h10L8 3 5 5 2 3z" fill="#d3121d" />
      </Svg>
    </Slot>
    <Slot $width={16}>
      <Triangle color="#888" />
    </Slot>
    <Slot $width={16}>
      <Triangle color="#888" />
    </Slot>
    <ToolField $width={57} defaultValue="12" aria-label="Size" />
    <ToolField $width={62} defaultValue="px" aria-label="Size unit" />
    <Slot $width={20} />
    <Slot $width={10}>
      <Svg w={10} h={8} box="0 0 10 8">
        <path d="M1 0h5v5H3z" fill="#55744f" />
        <path d="M4 3h6L7 7z" fill="#333" />
      </Svg>
    </Slot>
  </MainToolbar>
);

const App = () => (
  <>
    <GlobalStyle />
    <Page>
      <ThemeProvider theme={small}>
        <Shot $top={50}>
          <TopTools />
          <Workspace>
            <Panels theme={small} />
            <MapCanvas $pad="44px 0 2px 28px">
              <SymbolSelector theme={small} />
            </MapCanvas>
          </Workspace>
        </Shot>
      </ThemeProvider>
      <ThemeProvider theme={large}>
        <Shot>
          <Workspace>
            <Panels theme={large} cropped />
            <MapCanvas $pad="51px 2px 0 35px">
              <SelectorBehind theme={large} />
              <EffectProperties theme={large} />
            </MapCanvas>
          </Workspace>
        </Shot>
      </ThemeProvider>
    </Page>
  </>
);

export default App;
